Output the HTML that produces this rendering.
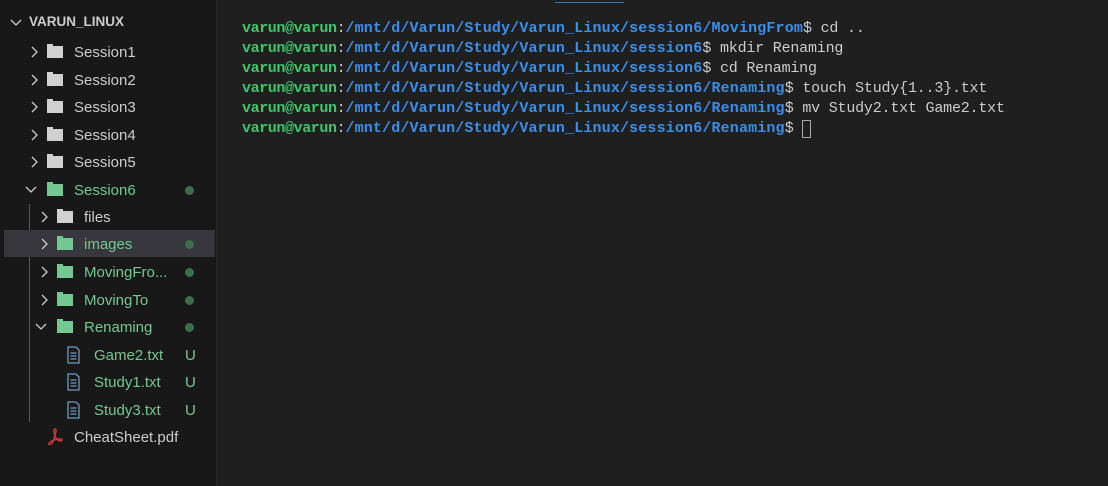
<!DOCTYPE html>
<html><head><style>
body{margin:0;width:1108px;height:486px;background:#1f1f1f;overflow:hidden;font-family:"Liberation Sans",sans-serif;}
#side{position:absolute;left:0;top:0;width:216px;height:486px;background:#181818;border-right:1px solid #2b2b2b;}
.row{position:absolute;left:4px;width:211px;height:27px;font-size:15px;color:#cccccc;line-height:29px;}
.row.sel{background:#37373d;}
.chev{position:absolute;top:1px;width:12px;height:27px;}
.fold{position:absolute;top:6px;width:17px;height:15px;}
.lbl{position:absolute;top:0;}
.g{color:#73c991;}
.dot{position:absolute;left:181px;top:10px;width:9px;height:9px;border-radius:50%;background:#3e6d4c;}
.u{position:absolute;left:181px;top:0;color:#73c991;}
#term{position:absolute;left:242px;top:19px;font-family:"Liberation Mono",monospace;font-size:15px;line-height:20px;color:#cccccc;white-space:pre;letter-spacing:-0.2px;}
.p{font-weight:bold;color:#3fc56b;letter-spacing:-0.4px;}
.b{color:#3b8eea;font-weight:bold;letter-spacing:0.15px;}
</style></head><body>
<div style="position:absolute;left:555px;top:2px;width:69px;height:1px;background:#2b79c2"></div>
<div id="side">
<svg style="position:absolute;left:10px;top:18px" width="12" height="10"><path d="M1 2l5 5 5-5" stroke="#ccc" stroke-width="1.3" fill="none"/></svg>
<div style="position:absolute;left:29px;top:14px;font-size:13.5px;font-weight:bold;color:#cccccc">VARUN_LINUX</div>
<div style="position:absolute;left:29px;top:204px;width:1px;height:218px;background:#585858"></div>

<div class="row" style="top:38px"><svg class="chev" style="left:25px"><path d="M3 8l5 5-5 5" stroke="#ccc" stroke-width="1.3" fill="none"/></svg><svg class="fold" style="left:43px"><path d="M0 0h6v2h10v12H0z" fill="#d0d0d0"/></svg><span class="lbl" style="left:70px">Session1</span></div>
<div class="row" style="top:66px"><svg class="chev" style="left:25px"><path d="M3 8l5 5-5 5" stroke="#ccc" stroke-width="1.3" fill="none"/></svg><svg class="fold" style="left:43px"><path d="M0 0h6v2h10v12H0z" fill="#d0d0d0"/></svg><span class="lbl" style="left:70px">Session2</span></div>
<div class="row" style="top:93px"><svg class="chev" style="left:25px"><path d="M3 8l5 5-5 5" stroke="#ccc" stroke-width="1.3" fill="none"/></svg><svg class="fold" style="left:43px"><path d="M0 0h6v2h10v12H0z" fill="#d0d0d0"/></svg><span class="lbl" style="left:70px">Session3</span></div>
<div class="row" style="top:121px"><svg class="chev" style="left:25px"><path d="M3 8l5 5-5 5" stroke="#ccc" stroke-width="1.3" fill="none"/></svg><svg class="fold" style="left:43px"><path d="M0 0h6v2h10v12H0z" fill="#d0d0d0"/></svg><span class="lbl" style="left:70px">Session4</span></div>
<div class="row" style="top:148px"><svg class="chev" style="left:25px"><path d="M3 8l5 5-5 5" stroke="#ccc" stroke-width="1.3" fill="none"/></svg><svg class="fold" style="left:43px"><path d="M0 0h6v2h10v12H0z" fill="#d0d0d0"/></svg><span class="lbl" style="left:70px">Session5</span></div>
<div class="row g" style="top:176px"><svg class="chev" style="left:21px;width:14px"><path d="M1 10l5 5 5-5" stroke="#ccc" stroke-width="1.3" fill="none"/></svg><svg class="fold" style="left:43px"><path d="M0 0h6v2h10v12H0z" fill="#73c991"/></svg><span class="lbl" style="left:70px">Session6</span><div class="dot"></div></div>
<div class="row" style="top:203px"><svg class="chev" style="left:35px"><path d="M3 8l5 5-5 5" stroke="#ccc" stroke-width="1.3" fill="none"/></svg><svg class="fold" style="left:53px"><path d="M0 0h6v2h10v12H0z" fill="#d0d0d0"/></svg><span class="lbl" style="left:80px">files</span></div>
<div class="row g sel" style="top:230px;height:27px"><svg class="chev" style="left:35px"><path d="M3 8l5 5-5 5" stroke="#ccc" stroke-width="1.3" fill="none"/></svg><svg class="fold" style="left:53px"><path d="M0 0h6v2h10v12H0z" fill="#73c991"/></svg><span class="lbl" style="left:80px">images</span><div class="dot"></div></div>
<div class="row g" style="top:258px"><svg class="chev" style="left:35px"><path d="M3 8l5 5-5 5" stroke="#ccc" stroke-width="1.3" fill="none"/></svg><svg class="fold" style="left:53px"><path d="M0 0h6v2h10v12H0z" fill="#73c991"/></svg><span class="lbl" style="left:80px">MovingFro...</span><div class="dot"></div></div>
<div class="row g" style="top:286px"><svg class="chev" style="left:35px"><path d="M3 8l5 5-5 5" stroke="#ccc" stroke-width="1.3" fill="none"/></svg><svg class="fold" style="left:53px"><path d="M0 0h6v2h10v12H0z" fill="#73c991"/></svg><span class="lbl" style="left:80px">MovingTo</span><div class="dot"></div></div>
<div class="row g" style="top:313px"><svg class="chev" style="left:31px;width:14px"><path d="M1 10l5 5 5-5" stroke="#ccc" stroke-width="1.3" fill="none"/></svg><svg class="fold" style="left:53px"><path d="M0 0h6v2h10v12H0z" fill="#73c991"/></svg><span class="lbl" style="left:80px">Renaming</span><div class="dot"></div></div>
<div class="row g" style="top:341px"><svg style="position:absolute;left:63px;top:5px" width="13" height="18"><path d="M1 1h8l3 3v13H1z" stroke="#6d9bc6" stroke-width="1.3" fill="none"/><path d="M3.5 7h6M3.5 10h6M3.5 13h6" stroke="#6d9bc6" stroke-width="1.2"/></svg><span class="lbl" style="left:90px">Game2.txt</span><span class="u">U</span></div>
<div class="row g" style="top:368px"><svg style="position:absolute;left:63px;top:5px" width="13" height="18"><path d="M1 1h8l3 3v13H1z" stroke="#6d9bc6" stroke-width="1.3" fill="none"/><path d="M3.5 7h6M3.5 10h6M3.5 13h6" stroke="#6d9bc6" stroke-width="1.2"/></svg><span class="lbl" style="left:90px">Study1.txt</span><span class="u">U</span></div>
<div class="row g" style="top:396px"><svg style="position:absolute;left:63px;top:5px" width="13" height="18"><path d="M1 1h8l3 3v13H1z" stroke="#6d9bc6" stroke-width="1.3" fill="none"/><path d="M3.5 7h6M3.5 10h6M3.5 13h6" stroke="#6d9bc6" stroke-width="1.2"/></svg><span class="lbl" style="left:90px">Study3.txt</span><span class="u">U</span></div>
<div class="row" style="top:423px"><svg style="position:absolute;left:43px;top:5px" width="16" height="17"><path d="M8 1c-2 0-1 6 1 9s6 4 6 2-6-1-10 1-4 4-2 4 4-6 5-10S10 1 8 1z" stroke="#c83a3a" stroke-width="1.5" fill="none"/></svg><span class="lbl" style="left:70px">CheatSheet.pdf</span></div>
</div>
<div id="term"><span class="p">varun@varun</span>:<span class="b">/mnt/d/Varun/Study/Varun_Linux/session6/MovingFrom</span>$ cd ..
<span class="p">varun@varun</span>:<span class="b">/mnt/d/Varun/Study/Varun_Linux/session6</span>$ mkdir Renaming
<span class="p">varun@varun</span>:<span class="b">/mnt/d/Varun/Study/Varun_Linux/session6</span>$ cd Renaming
<span class="p">varun@varun</span>:<span class="b">/mnt/d/Varun/Study/Varun_Linux/session6/Renaming</span>$ touch Study{1..3}.txt
<span class="p">varun@varun</span>:<span class="b">/mnt/d/Varun/Study/Varun_Linux/session6/Renaming</span>$ mv Study2.txt Game2.txt
<span class="p">varun@varun</span>:<span class="b">/mnt/d/Varun/Study/Varun_Linux/session6/Renaming</span>$ <span style="display:inline-block;width:7px;height:16px;border:1px solid #aaa;vertical-align:top;margin-top:1px"></span></div>
</body></html>
